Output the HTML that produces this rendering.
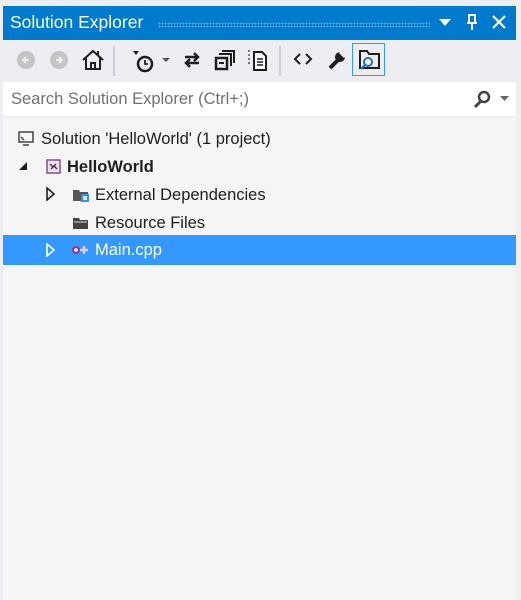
<!DOCTYPE html>
<html><head><style>
*{margin:0;padding:0;box-sizing:border-box}
body{width:521px;height:600px;background:#eeeef2;font-family:"Segoe UI","Liberation Sans",sans-serif;position:relative;overflow:hidden}
.title{position:absolute;left:3px;top:6px;width:513px;height:34px;background:#007acc;color:#fff;font-size:17.5px}
.title span{position:absolute;left:7px;top:6px}
.dots{position:absolute;left:155px;top:16px;width:272px;height:6px;background-image:radial-gradient(circle,#5aa8de 0.8px,transparent 1px);background-size:3px 3px}
.tb{position:absolute;top:40px;left:3px;width:513px;height:40px}
.ic{position:absolute}
.search{position:absolute;left:3px;top:82px;width:513px;height:34px;background:#fff;color:#717171;font-size:16.5px}
.search span{position:absolute;left:8px;top:8px}
.tree{position:absolute;left:3px;top:118px;width:513px;height:482px;background:#f5f5f5}
.strip{position:absolute;left:516px;top:0;width:5px;height:600px;background:#eeeef2}
.row{position:absolute;left:0;width:513px;height:29px;font-size:16.5px;color:#1e1e1e}
.row span{position:absolute;top:6px}
.sel{background:#3399ff;color:#fff}
</style></head><body>
<div class="strip"></div>
<div class="title"><span>Solution Explorer</span><div class="dots"></div>
<svg class="ic" style="left:435px;top:11px" width="14" height="10"><path d="M1 2h12L7 9z" fill="#fff"/></svg>
<svg class="ic" style="left:462px;top:7px" width="14" height="20"><path d="M3 2h8M4 2v8h6V2M2 10h10M7 10v7" stroke="#fff" stroke-width="2" fill="none"/></svg>
<svg class="ic" style="left:488px;top:8px" width="16" height="16"><path d="M2 2l12 12M14 2L2 14" stroke="#fff" stroke-width="2.2"/></svg>
</div>
<div class="tb">
<svg class="ic" style="left:13px;top:10px" width="20" height="20"><circle cx="10" cy="10" r="9" fill="#c4c4c6"/><path d="M13 10H7M10 7l-3 3 3 3" stroke="#eee" stroke-width="2" fill="none"/></svg>
<svg class="ic" style="left:46px;top:10px" width="20" height="20"><circle cx="10" cy="10" r="9" fill="#c4c4c6"/><path d="M7 10h6M10 7l3 3-3 3" stroke="#eee" stroke-width="2" fill="none"/></svg>
<svg class="ic" style="left:78px;top:8px" width="24" height="24"><path d="M2 12L12 3l10 9M5 10v11h14V10M10 21v-6h4v6M17 3v5" stroke="#1e1e1e" stroke-width="2" fill="none"/></svg>
<div class="ic" style="left:110px;top:6px;width:2px;height:30px;background:#ccd"></div>
<svg class="ic" style="left:127px;top:8px" width="26" height="26"><path d="M3 3h6l-3 4z" fill="#1e1e1e"/><circle cx="15" cy="16" r="7" fill="none" stroke="#1e1e1e" stroke-width="2.5"/><path d="M15 12v4h3" stroke="#1e1e1e" stroke-width="1.8" fill="none"/></svg>
<svg class="ic" style="left:159px;top:18px" width="8" height="5"><path d="M0 0h8L4 4z" fill="#555"/></svg>
<svg class="ic" style="left:179px;top:10px" width="20" height="20"><path d="M3 7h13M12 3l4 4-4 4M17 13H4M8 9l-4 4 4 4" stroke="#1e1e1e" stroke-width="2.5" fill="none"/></svg>
<svg class="ic" style="left:211px;top:9px" width="22" height="22"><path d="M8 2h12v12M5 5h12v12" stroke="#1e1e1e" stroke-width="2" fill="none"/><rect x="2" y="9" width="11" height="11" fill="none" stroke="#1e1e1e" stroke-width="2.5"/><path d="M5 14h5" stroke="#1e1e1e" stroke-width="2"/></svg>
<svg class="ic" style="left:243px;top:8px" width="22" height="24"><path d="M3 2v16" stroke="#555" stroke-width="1.5" stroke-dasharray="2 2"/><path d="M8 4h8l4 4v14H8z" fill="#fff" stroke="#1e1e1e" stroke-width="2"/><path d="M11 11h6M11 14h6M11 17h6" stroke="#1e1e1e" stroke-width="1.5"/></svg>
<div class="ic" style="left:276px;top:6px;width:2px;height:30px;background:#ccd"></div>
<svg class="ic" style="left:290px;top:12px" width="20" height="14"><path d="M7 2L2 7l5 5M13 2l5 5-5 5" stroke="#1e1e1e" stroke-width="2" fill="none"/></svg>
<svg class="ic" style="left:323px;top:9px" width="22" height="22"><path d="M4 19l8-8" stroke="#1e1e1e" stroke-width="4"/><circle cx="14" cy="8" r="5" fill="#1e1e1e"/><path d="M14 3l5 5" stroke="#eeeef2" stroke-width="3"/></svg>
<div class="ic" style="left:349px;top:3px;width:33px;height:33px;border:1px solid #3399ff"></div>
<svg class="ic" style="left:355px;top:8px" width="24" height="22"><path d="M2 20V3h7l2 3h10v14z" fill="none" stroke="#1e1e1e" stroke-width="2"/><circle cx="10" cy="14" r="4" fill="#fff" stroke="#1e70c8" stroke-width="2"/><path d="M7 17l-4 4" stroke="#1e70c8" stroke-width="2"/></svg>
</div>
<div class="search"><span>Search Solution Explorer (Ctrl+;)</span>
<svg class="ic" style="left:470px;top:8px" width="20" height="20"><circle cx="11" cy="7" r="5" fill="none" stroke="#424242" stroke-width="2.5"/><path d="M8 11l-6 6" stroke="#424242" stroke-width="3"/></svg>
<svg class="ic" style="left:497px;top:14px" width="9" height="6"><path d="M0 0h9L4.5 5z" fill="#666"/></svg>
</div>
<div class="tree">
<div class="row" style="top:6px"><svg class="ic" style="left:15px;top:7px" width="16" height="15"><rect x="1" y="1" width="14" height="10" fill="none" stroke="#444" stroke-width="1.5"/><path d="M5 14h6M3 6l3 3" stroke="#444" stroke-width="1.5"/></svg><span style="left:38px">Solution 'HelloWorld' (1 project)</span></div>
<div class="row" style="top:34px"><svg class="ic" style="left:15px;top:9px" width="10" height="10"><path d="M9 1v8H1z" fill="#1e1e1e"/></svg><svg class="ic" style="left:43px;top:7px" width="16" height="16"><rect x="1" y="1" width="13" height="13" fill="#f0e0f0" stroke="#8a4a9a" stroke-width="1.5"/><path d="M4 5l3 3M8 7l3 3M5 10l5-5" stroke="#333" stroke-width="1.3"/></svg><span style="left:64px;font-weight:bold">HelloWorld</span></div>
<div class="row" style="top:62px"><svg class="ic" style="left:43px;top:7px" width="10" height="14"><path d="M1 1l7 6-7 6z" fill="none" stroke="#1e1e1e" stroke-width="1.6"/></svg><svg class="ic" style="left:69px;top:7px" width="18" height="16"><path d="M1 3h6l1 2h8v9H1z" fill="#555"/><rect x="9" y="7" width="8" height="8" fill="#3a8ee0"/><rect x="11" y="9" width="4" height="4" fill="#cfe3f8"/></svg><span style="left:92px">External Dependencies</span></div>
<div class="row" style="top:90px"><svg class="ic" style="left:69px;top:7px" width="18" height="16"><path d="M1 3h6l1 2h8v9H1z" fill="#444"/><path d="M2 7h13" stroke="#ddd" stroke-width="1"/></svg><span style="left:92px">Resource Files</span></div>
<div class="row sel" style="top:117px;height:30px"><svg class="ic" style="left:43px;top:8px" width="10" height="14"><path d="M1 1l7 6-7 6z" fill="none" stroke="#fff" stroke-width="1.6"/></svg><svg class="ic" style="left:68px;top:9px" width="18" height="12"><circle cx="5" cy="6" r="4" fill="#8a3a9a"/><path d="M9 6h8M13 2v8" stroke="#e8c8f0" stroke-width="2.5"/><path d="M3 6h4M5 4v4" stroke="#fff" stroke-width="1.5"/></svg><span style="left:92px">Main.cpp</span></div>
</div>
</body></html>
